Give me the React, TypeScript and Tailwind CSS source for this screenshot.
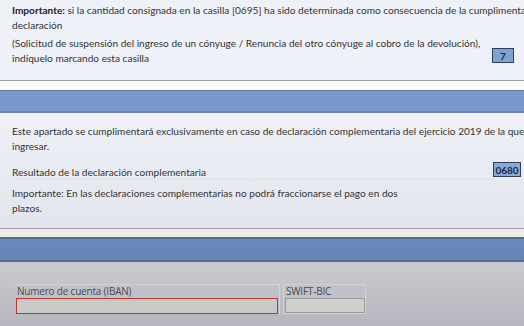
import React from "react";

const font = { fontFamily: "Lato, 'Open Sans', sans-serif" };

function CodeBox({ children, wide }: { children: React.ReactNode; wide?: boolean }) {
  return (
    <div
      className={
        "flex items-center justify-center border border-[#2f3f58] text-[10px] font-bold text-[#1c2a44] leading-none " +
        (wide ? "w-[28px] h-[15px] bg-[#8aa7d2]" : "w-[22px] h-[15px] bg-[#7fa2d6]")
      }
    >
      {children}
    </div>
  );
}

function BlueBar({ dark }: { dark?: boolean }) {
  return (
    <div className="flex flex-col">
      <div className="h-px bg-[#9ca1aa]" />
      <div className={dark ? "h-[8px] bg-[#ecece8]" : "h-[9px] bg-[#fafaf6]"} />
      <div
        className={
          dark
            ? "h-[25px] border-t-2 border-b-2 border-t-[#55698c] border-b-[#566c92] bg-gradient-to-b from-[#6c8abc] to-[#6585b7]"
            : "h-[23px] border-t border-b-2 border-t-[#5f79a6] border-b-[#6a84b0] bg-[#7898ca]"
        }
      />
    </div>
  );
}

export default function App() {
  return (
    <div className="w-[524px] h-[326px] overflow-hidden text-[#333] flex flex-col" style={font}>
      {/* Aviso 0695 */}
      <div className="h-[80px] bg-[#eef1f7] pl-3 pt-[3px] text-[10.1px] leading-[14.5px] whitespace-nowrap overflow-hidden">
        <div>
          <span className="font-bold text-[#222]">Importante:</span> si la cantidad consignada en la casilla [0695] ha
          sido determinada como consecuencia de la cumplimentación de la
        </div>
        <div>declaración</div>
        <div className="flex items-end mt-[4px] pr-[10px]">
          <div className="flex-1 min-w-0">
            <div>(Solicitud de suspensión del ingreso de un cónyuge / Renuncia del otro cónyuge al cobro de la devolución),</div>
            <div>indíquelo marcando esta casilla</div>
          </div>
          <div className="mb-[2px]">
            <CodeBox>7</CodeBox>
          </div>
        </div>
      </div>

      <BlueBar />

      {/* Declaración complementaria */}
      <div className="h-[115px] bg-gradient-to-b from-[#eff1f7] to-[#e2e5ed] pl-3 pt-[11px] text-[10.1px] leading-[14.5px] whitespace-nowrap overflow-hidden">
        <div>
          Este apartado se cumplimentará exclusivamente en caso de declaración complementaria del ejercicio 2019 de la que
          se derive una cantidad a
        </div>
        <div>ingresar.</div>
        <div className="flex items-center mt-[9px] pr-[3px]">
          <div className="flex-1 min-w-0 border-b border-dotted border-[#d2d6df]">Resultado de la declaración complementaria</div>
          <div className="mb-[6px]">
            <CodeBox wide>0680</CodeBox>
          </div>
        </div>
        <div className="mt-[3px]">Importante: En las declaraciones complementarias no podrá fraccionarse el pago en dos</div>
        <div>plazos.</div>
      </div>

      <BlueBar dark />

      {/* Cuenta bancaria */}
      <div
        className="flex-1 bg-gradient-to-b from-[#cacbd1] to-[#b6b7be] pt-[22px] pl-[14px] flex gap-[3px]"
        style={{ fontFamily: "'Open Sans', sans-serif" }}
      >
        <div className="w-[266px] h-[30px] border border-[#d3d4d8] border-l-0 border-b-0 flex flex-col pl-[2px]">
          <div className="text-[10px] leading-[12px] text-[#4a4a4e] pl-[1px] -tracking-[0.2px]">Numero de cuenta (IBAN)</div>
          <div className="mt-[1px] w-[262px] h-[17px] border-[1.5px] border-[#c2352f] bg-[#c9c9c8]" />
        </div>
        <div className="w-[83px] h-[30px] border border-[#d0d1d6] flex flex-col pl-[1px]">
          <div className="text-[10px] leading-[12px] text-[#4a4a4e] pl-[1px] -tracking-[0.2px]">SWIFT-BIC</div>
          <div className="mt-[1px] w-[80px] h-[16px] border border-[#9b9b9d] bg-[#cfcfcc]" />
        </div>
      </div>
    </div>
  );
}
